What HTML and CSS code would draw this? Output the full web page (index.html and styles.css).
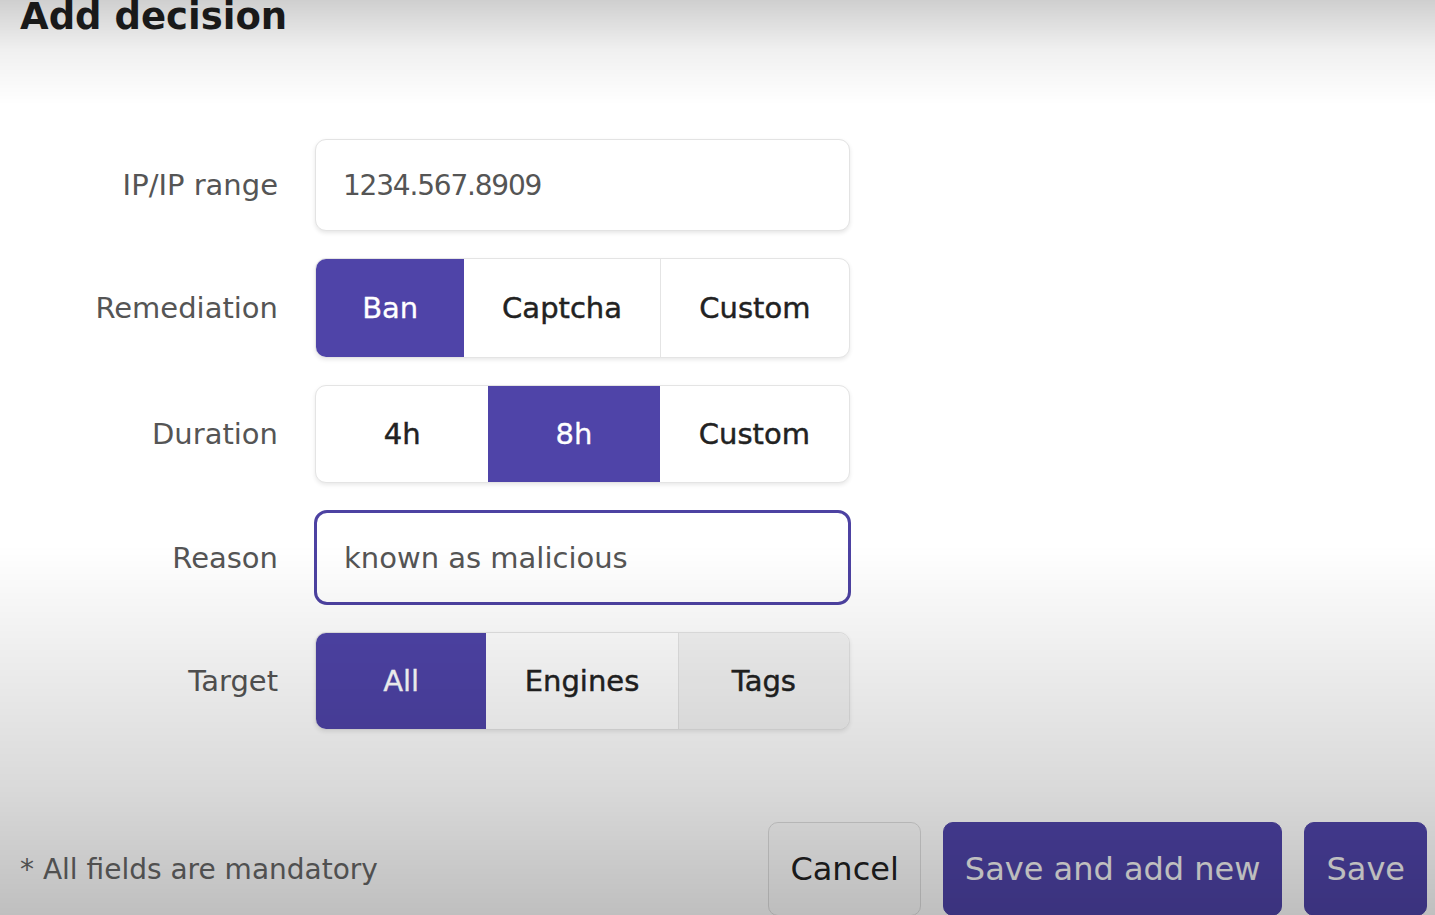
FILE: index.html
```html
<!DOCTYPE html>
<html lang="en">
<head>
<meta charset="utf-8">
<title>Add decision</title>
<link rel="stylesheet" href="styles.css">
</head>
<body>
<div class="page">
  <h1 class="title">Add decision</h1>
  <form class="form">
    <label class="label">IP/IP range</label>
    <div class="input input-ip">1234.567.8909</div>

    <label class="label">Remediation</label>
    <div class="seg seg-remediation">
      <span class="seg-item active">Ban</span>
      <span class="seg-item">Captcha</span>
      <span class="seg-item divided">Custom</span>
    </div>

    <label class="label">Duration</label>
    <div class="seg seg-duration">
      <span class="seg-item">4h</span>
      <span class="seg-item active">8h</span>
      <span class="seg-item">Custom</span>
    </div>

    <label class="label">Reason</label>
    <div class="input input-reason">known as malicious</div>

    <label class="label">Target</label>
    <div class="seg seg-target">
      <span class="seg-item active">All</span>
      <span class="seg-item">Engines</span>
      <span class="seg-item divided hover">Tags</span>
    </div>
  </form>
  <div class="footer">
    <span class="note">* All fields are mandatory</span>
    <div class="actions">
      <button class="btn btn-light" type="button">Cancel</button>
      <button class="btn btn-primary" type="button">Save and add new</button>
      <button class="btn btn-primary" type="button">Save</button>
    </div>
  </div>
</div>
</body>
</html>
```
FILE: styles.css
```css
html, body {
  margin: 0;
  padding: 0;
  height: 100%;
  overflow: hidden;
}
body {
  background: #ffffff;
  font-family: "DejaVu Sans", "Liberation Sans", sans-serif;
  color: #222;
}
body::after {
  content: "";
  position: fixed;
  inset: 0;
  pointer-events: none;
  background: linear-gradient(to bottom,
    rgba(0,0,0,0.19) 0px,
    rgba(0,0,0,0.06) 50px,
    rgba(0,0,0,0) 105px,
    rgba(0,0,0,0) 545px,
    rgba(0,0,0,0.07) 660px,
    rgba(0,0,0,0.15) 790px,
    rgba(0,0,0,0.25) 915px);
}
.page {
  display: flex;
  flex-direction: column;
}
.title {
  margin: -2px 0 0 20px;
  font-size: 37px;
  line-height: 37px;
  font-weight: bold;
  color: #1e1e1e;
}
.form {
  display: grid;
  grid-template-columns: 278px 535px;
  column-gap: 37px;
  row-gap: 27px;
  margin-top: 104px;
  align-items: center;
}
.label {
  text-align: right;
  font-size: 29px;
  color: #555;
}
.input {
  box-sizing: border-box;
  display: flex;
  align-items: center;
  background: #fff;
  border-radius: 11px;
  padding-left: 27px;
  color: #555;
}
.input-ip {
  height: 92px;
  border: 1px solid #e3e3e3;
  box-shadow: 0 2px 4px rgba(0,0,0,0.10);
  font-size: 28px;
  letter-spacing: -1.2px;
}
.input-reason {
  height: 95px;
  width: 537px;
  margin-left: -1px;
  border: 3px solid #4d42a2;
  border-radius: 13px;
  font-size: 29px;
  padding-left: 27px;
}
.seg {
  box-sizing: border-box;
  display: grid;
  border: 1px solid #e4e4e4;
  border-radius: 11px;
  overflow: hidden;
  background: #fff;
  box-shadow: 0 2px 4px rgba(0,0,0,0.09);
}
.seg-remediation {
  height: 100px;
  grid-template-columns: 149fr 196fr 190fr;
}
.seg-duration {
  height: 98px;
  grid-template-columns: 173fr 172fr 190fr;
}
.seg-target {
  height: 98px;
  grid-template-columns: 171fr 192fr 172fr;
}
.seg-item {
  display: flex;
  align-items: center;
  justify-content: center;
  font-size: 29px;
  color: #222;
  -webkit-text-stroke: 0.45px currentColor;
}
.seg-item.divided {
  border-left: 1px solid #e4e4e4;
}
.seg-item.hover {
  background: #f4f4f4;
}
.seg-item.active {
  background: #4f44a8;
  color: #fff;
  -webkit-text-stroke: 0.3px currentColor;
}
.footer {
  display: flex;
  align-items: center;
  justify-content: space-between;
  margin-top: 92px;
  padding: 0 8px 0 20px;
}
.note {
  font-size: 28px;
  color: #666;
}
.actions {
  display: flex;
  gap: 22px;
}
.btn {
  box-sizing: border-box;
  height: 94px;
  padding: 0 21px;
  border-radius: 10px;
  font-family: "DejaVu Sans", "Liberation Sans", sans-serif;
  font-size: 32px;
  cursor: pointer;
}
.btn-light {
  background: #fdfdfd;
  border: 1px solid #dedede;
  color: #222;
}
.btn-primary {
  background: #4f44a8;
  border: 1px solid #4f44a8;
  color: #f2f2f2;
}
```
